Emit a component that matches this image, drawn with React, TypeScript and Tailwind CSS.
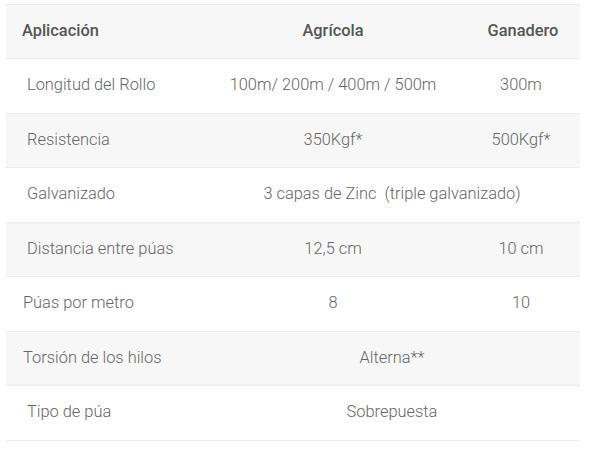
const rows: { label: string; pad: string; a: string; b?: string; bg: boolean }[] = [
  { label: 'Longitud del Rollo', pad: 'pl-[21px]', a: '100m/ 200m / 400m / 500m', b: '300m', bg: false },
  { label: 'Resistencia', pad: 'pl-[21px]', a: '350Kgf*', b: '500Kgf*', bg: true },
  { label: 'Galvanizado', pad: 'pl-[21px]', a: '3 capas de Zinc\u00a0 (triple galvanizado)', bg: false },
  { label: 'Distancia entre púas', pad: 'pl-[21px]', a: '12,5 cm', b: '10 cm', bg: true },
  { label: 'Púas por metro', pad: 'pl-[17px]', a: '8', b: '10', bg: false },
  { label: 'Torsión de los hilos', pad: 'pl-[17px]', a: 'Alterna**', bg: true },
  { label: 'Tipo de púa', pad: 'pl-[21px]', a: 'Sobrepuesta', bg: false },
];

export default function App() {
  return (
    <div className="w-[590px] h-[450px] bg-white pt-[4px] pl-[6px] font-['Roboto',sans-serif]">
      <table className="w-[574px] table-fixed border-collapse text-[16.4px] text-[#666]">
        <colgroup>
          <col className="w-[198px]" />
          <col className="w-[258px]" />
          <col className="w-[118px]" />
        </colgroup>
        <thead>
          <tr className="h-[54px] bg-[#f7f7f7] border-t border-b border-[#ebebeb]">
            <th className="pl-[16px] text-left font-medium text-[#555]">Aplicación</th>
            <th className="text-center font-medium text-[#555]">Agrícola</th>
            <th className="pl-[4px] text-center font-medium text-[#555]">Ganadero</th>
          </tr>
        </thead>
        <tbody>
          {rows.map((r) => (
            <tr key={r.label} className={`h-[54.5px] border-b border-[#ebebeb] ${r.bg ? 'bg-[#f7f7f7]' : 'bg-white'}`}>
              <td className={`${r.pad} font-light`}>{r.label}</td>
              {r.b !== undefined ? (
                <>
                  <td className="text-center font-light">{r.a}</td>
                  <td className="text-center font-light">{r.b}</td>
                </>
              ) : (
                <td colSpan={2} className="text-center font-light">{r.a}</td>
              )}
            </tr>
          ))}
        </tbody>
      </table>
    </div>
  );
}
